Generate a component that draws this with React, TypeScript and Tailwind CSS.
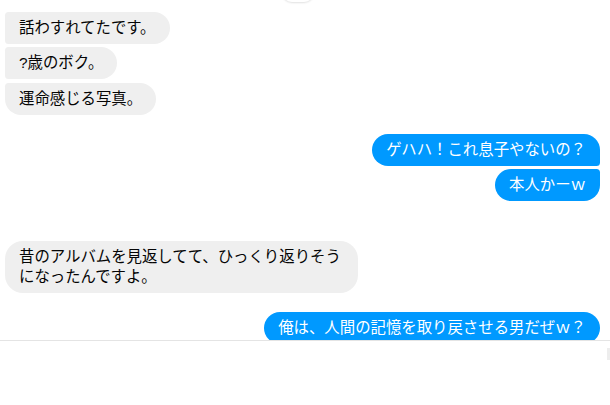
import React from 'react';

type Msg = {
  text: string;
  mine?: boolean;
  shape: string;
  gap: string;
};

const messages: Msg[] = [
  { text: '話わすれてたです。', shape: 'rounded-l-[4px] rounded-r-[18px]', gap: 'mt-0' },
  { text: '?歳のボク。', shape: 'rounded-l-[4px] rounded-r-[18px]', gap: 'mt-[3px]' },
  { text: '運命感じる写真。', shape: 'rounded-tl-[4px] rounded-bl-[18px] rounded-r-[18px]', gap: 'mt-[4px]' },
  { text: 'ゲハハ！これ息子やないの？', mine: true, shape: 'rounded-l-[18px] rounded-tr-[18px] rounded-br-[4px]', gap: 'mt-[19px]' },
  { text: '本人かーｗ', mine: true, shape: 'rounded-l-[18px] rounded-tr-[4px] rounded-br-[18px]', gap: 'mt-[3px]' },
  {
    text: '昔のアルバムを見返してて、ひっくり返りそうになったんですよ。',
    shape: 'rounded-[18px]',
    gap: 'mt-[40px]',
  },
  { text: '俺は、人間の記憶を取り戻させる男だぜｗ？', mine: true, shape: 'rounded-[18px]', gap: 'mt-[19px]' },
];

const Bubble = ({ msg }: { msg: Msg }) => (
  <div className={`flex ${msg.mine ? 'justify-end' : 'justify-start'} ${msg.gap}`}>
    <div
      className={`max-w-[353px] px-[14px] py-[6px] text-[15.4px] leading-[20px] ${msg.shape} ${
        msg.mine ? 'bg-[#0099ff] text-white' : 'bg-[#efefef] text-[#050505]'
      }`}
    >
      {msg.text}
    </div>
  </div>
);

const App = () => {
  return (
    <div
      className="flex h-[405px] w-[610px] flex-col overflow-hidden bg-white"
      style={{ fontFamily: '"Liberation Sans", "Noto Sans CJK JP", sans-serif' }}
    >
      <div className="h-[340px] shrink-0 overflow-hidden pl-[5px] pr-[10px]">
        {/* tail of the scrolled-away date pill */}
        <div className="flex justify-center">
          <div className="-mt-[20px] ml-[-10px] h-[22px] w-[32px] rounded-[10px] bg-white shadow-[0_1px_2px_rgba(0,0,0,0.12)]" />
        </div>
        <div className="pt-[10px]">
          {messages.map((m, i) => (
            <Bubble key={i} msg={m} />
          ))}
        </div>
      </div>
      <div className="relative flex-1 border-t border-[#e4e4e4] bg-white">
        <div className="absolute right-0 top-[7px] h-[12px] w-[3px] bg-[#ededed]" />
      </div>
    </div>
  );
};

export default App;
